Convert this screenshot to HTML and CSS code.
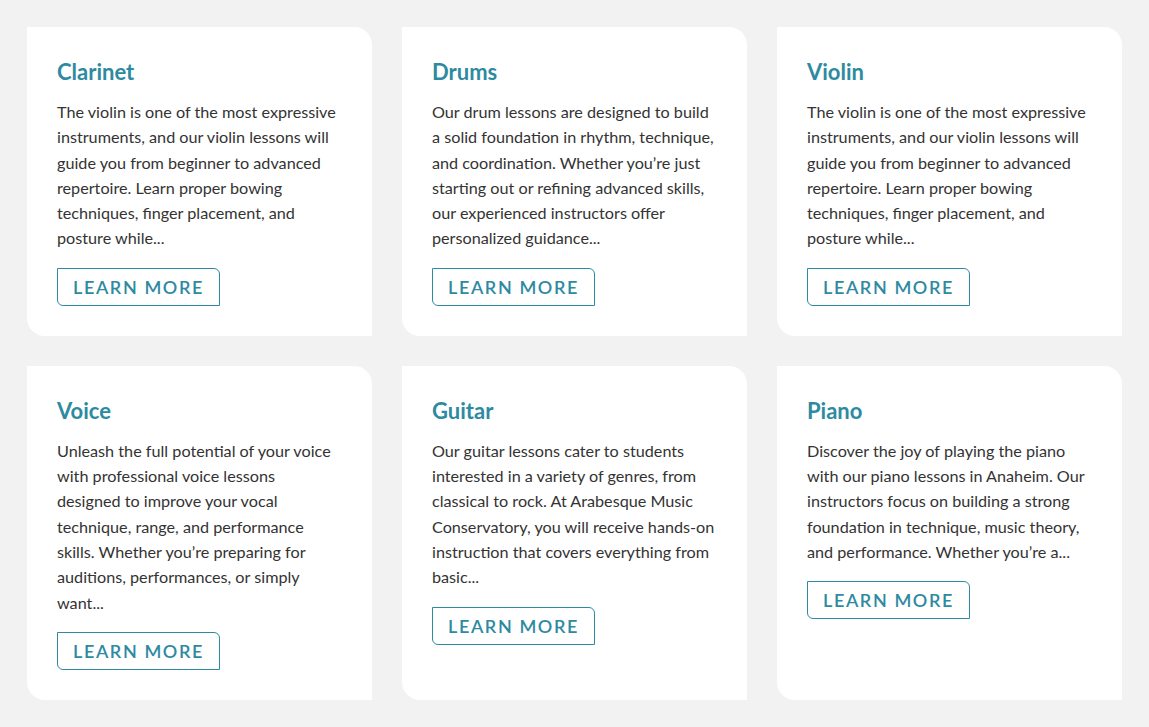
FILE: index.html
```html
<!DOCTYPE html>
<html lang="en">
<head>
  <meta charset="UTF-8">
  <title>Lessons</title>
  <link rel="stylesheet" href="styles.css">
</head>
<body>
  <div class="lessons">
    <div class="lesson-card">
      <h3 class="lesson-title">Clarinet</h3>
      <p class="lesson-desc">The violin is one of the most expressive instruments, and our violin lessons will guide you from beginner to advanced repertoire. Learn proper bowing techniques, finger placement, and posture while...</p>
      <a class="learn-more" href="#">Learn More</a>
    </div>
    <div class="lesson-card">
      <h3 class="lesson-title">Drums</h3>
      <p class="lesson-desc">Our drum lessons are designed to build a solid foundation in rhythm, technique, and coordination. Whether you’re just starting out or refining advanced skills, our experienced instructors offer personalized guidance...</p>
      <a class="learn-more" href="#">Learn More</a>
    </div>
    <div class="lesson-card">
      <h3 class="lesson-title">Violin</h3>
      <p class="lesson-desc">The violin is one of the most expressive instruments, and our violin lessons will guide you from beginner to advanced repertoire. Learn proper bowing techniques, finger placement, and posture while...</p>
      <a class="learn-more" href="#">Learn More</a>
    </div>
    <div class="lesson-card">
      <h3 class="lesson-title">Voice</h3>
      <p class="lesson-desc">Unleash the full potential of your voice with professional voice lessons designed to improve your vocal technique, range, and performance skills. Whether you’re preparing for auditions, performances, or simply want...</p>
      <a class="learn-more" href="#">Learn More</a>
    </div>
    <div class="lesson-card">
      <h3 class="lesson-title">Guitar</h3>
      <p class="lesson-desc">Our guitar lessons cater to students interested in a variety of genres, from classical to rock. At Arabesque Music Conservatory, you will receive hands-on instruction that covers everything from basic...</p>
      <a class="learn-more" href="#">Learn More</a>
    </div>
    <div class="lesson-card">
      <h3 class="lesson-title">Piano</h3>
      <p class="lesson-desc">Discover the joy of playing the piano with our piano lessons in Anaheim. Our instructors focus on building a strong foundation in technique, music theory, and performance. Whether you’re a...</p>
      <a class="learn-more" href="#">Learn More</a>
    </div>
  </div>
</body>
</html>
```

FILE: styles.css
```css
body {
  margin: 0;
  background-color: #f2f2f2;
  font-family: 'Lato', 'Open Sans', sans-serif;
  color: #333333;
}

.lessons {
  display: grid;
  grid-template-columns: repeat(3, 345px);
  column-gap: 30px;
  row-gap: 30px;
  padding: 27px;
}

.lesson-card {
  background-color: #ffffff;
  border-radius: 0 18px 0 18px;
  padding: 30px 32px 30px 30px;
  display: flex;
  flex-direction: column;
  align-items: flex-start;
}

.lesson-title {
  margin: 0 0 12px 0;
  font-size: 22px;
  font-weight: 700;
  line-height: 30px;
  color: #2e8aa1;
}

.lesson-desc {
  margin: 0 0 17px 0;
  font-size: 16.2px;
  line-height: 25.3px;
  color: #333333;
}

.learn-more {
  display: inline-block;
  box-sizing: border-box;
  width: 163px;
  height: 38px;
  line-height: 36px;
  text-align: center;
  border: 1px solid #2e8aa1;
  border-radius: 0 6px 0 6px;
  color: #2e8aa1;
  text-decoration: none;
  text-transform: uppercase;
  font-size: 18px;
  font-weight: 600;
  letter-spacing: 1.6px;
}
```
